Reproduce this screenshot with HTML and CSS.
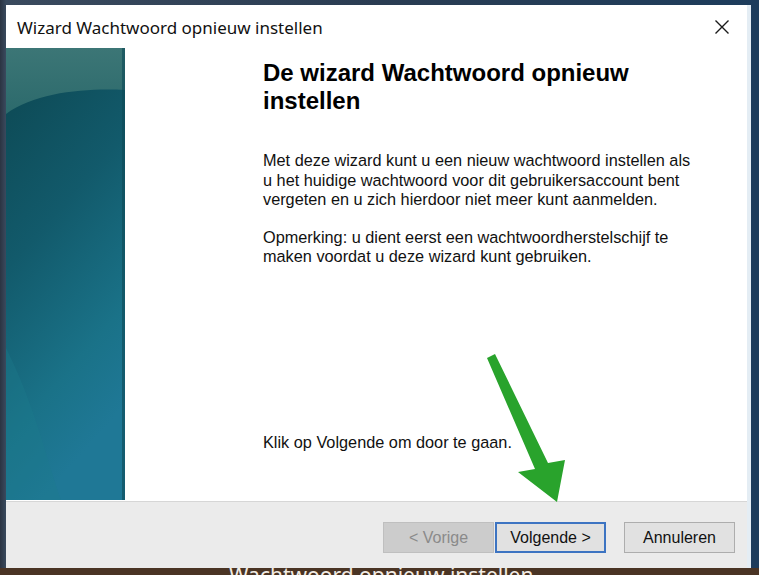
FILE: index.html
```html
<!DOCTYPE html>
<html lang="nl">
<head>
  <meta charset="UTF-8">
  <title>Wizard Wachtwoord opnieuw instellen</title>
  <link rel="stylesheet" href="styles.css">
</head>
<body>

<div class="window">
  <div class="titlebar">
    <span class="title">Wizard Wachtwoord opnieuw instellen</span>
    <span class="close">
      <svg width="16" height="16" viewBox="0 0 16 16">
        <path d="M1.5 1.5 L14.5 14.5 M14.5 1.5 L1.5 14.5" stroke="#1a1a1a" stroke-width="1.4" fill="none"/>
      </svg>
    </span>
  </div>

  <div class="main">
    <div class="side">
      <svg width="119" height="452" viewBox="0 0 119 452" preserveAspectRatio="none">
        <defs>
          <linearGradient id="sideGrad" x1="0" y1="0" x2="0.3" y2="1">
            <stop offset="0" stop-color="#0c4650"/>
            <stop offset="0.45" stop-color="#125a6b"/>
            <stop offset="0.8" stop-color="#1a7288"/>
            <stop offset="1" stop-color="#1f7896"/>
          </linearGradient>
          <linearGradient id="topGrad" x1="0" y1="0" x2="0" y2="1">
            <stop offset="0" stop-color="#3c7676"/>
            <stop offset="1" stop-color="#2c6a6c"/>
          </linearGradient>
        </defs>
        <rect x="0" y="0" width="119" height="452" fill="url(#sideGrad)"/>
        <path d="M0 0 H119 V42 C80 40 30 44 0 66 Z" fill="url(#topGrad)"/>
        <path d="M0 300 C30 360 40 410 55 452 H0 Z" fill="#1d7b8c" opacity="0.35"/>
        <rect x="116" y="0" width="3" height="452" fill="#0e4a57" opacity="0.6"/>
      </svg>
    </div>
    <div class="content">
      <h1>De wizard Wachtwoord opnieuw instellen</h1>
      <p>Met deze wizard kunt u een nieuw wachtwoord instellen als u het huidige wachtwoord voor dit gebruikersaccount bent vergeten en u zich hierdoor niet meer kunt aanmelden.</p>
      <p>Opmerking: u dient eerst een wachtwoordherstelschijf te maken voordat u deze wizard kunt gebruiken.</p>
      <p class="next-hint">Klik op Volgende om door te gaan.</p>
    </div>
  </div>

  <div class="buttons">
    <button class="btn" disabled>&lt; Vorige</button>
    <button class="btn default">Volgende &gt;</button>
    <button class="btn cancel">Annuleren</button>
  </div>

  <svg class="arrow" width="759" height="575" viewBox="0 0 759 575">
    <polygon points="487,358 495,354 548,463 565,460 557,502 518,472 535,469" fill="#29a32c"/>
  </svg>
</div>

<div class="behind">Wachtwoord opnieuw instellen</div>

</body>
</html>
```

FILE: styles.css
```css
html, body {
  margin: 0;
  height: 100%;
  overflow: hidden;
}
body {
  background: linear-gradient(90deg, #2b3442 0, #3a4a5e 6px, #2a3c52 50%, #1d3c5c 100%);
  font-family: "Liberation Sans", Arial, sans-serif;
  color: #000;
  padding-top: 5px;
  box-sizing: border-box;
}
.window {
  margin-left: 6px;
  width: 745px;
  height: 563px;
  background: #fff;
  display: flex;
  flex-direction: column;
  border-right: 4px solid #e4edf4;
  box-sizing: border-box;
}
.titlebar {
  height: 43px;
  flex: none;
  display: flex;
  align-items: center;
  justify-content: space-between;
  padding: 0 9px 0 11px;
}
.title {
  font-family: "Noto Sans", sans-serif;
  font-size: 17px;
  color: #111;
  margin-top: 2px;
}
.close {
  display: flex;
  margin-right: 8px;
  margin-top: 1px;
}
.main {
  flex: 1;
  display: flex;
  border-bottom: 1px solid #d6d6d6;
}
.side {
  width: 119px;
  flex: none;
  display: flex;
}
.content {
  padding: 11px 0 0 138px;
  width: 430px;
}
h1 {
  font-size: 24px;
  line-height: 28px;
  font-weight: bold;
  margin: 0 0 36px;
  width: 400px;
}
p {
  font-size: 16.3px;
  line-height: 19.5px;
  margin: 0 0 18px;
  color: #111;
}
.next-hint {
  margin-top: 166px;
}
.buttons {
  height: 66px;
  flex: none;
  background: #ebebeb;
  display: flex;
  justify-content: flex-end;
  align-items: flex-start;
  padding: 20px 12px 0 0;
  box-sizing: border-box;
  gap: 1px;
}
.btn {
  width: 111px;
  height: 31px;
  font-family: "Liberation Sans", Arial, sans-serif;
  font-size: 16px;
  background: #e1e1e1;
  border: 1px solid #adadad;
  color: #111;
  padding: 0;
}
.btn[disabled] {
  background: #cccccc;
  border-color: #bfbfbf;
  color: #8a8a8a;
}
.btn.default {
  border: 2px solid #3d74c2;
}
.btn.cancel {
  margin-left: 17px;
}
.arrow {
  position: absolute;
  left: 0;
  top: 0;
  pointer-events: none;
}
.behind {
  height: 7px;
  overflow: hidden;
  background: #4a3424;
  color: #f2ece4;
  font-family: "Noto Sans", sans-serif;
  font-size: 21px;
  line-height: 14px;
  padding-left: 229px;
}
```
